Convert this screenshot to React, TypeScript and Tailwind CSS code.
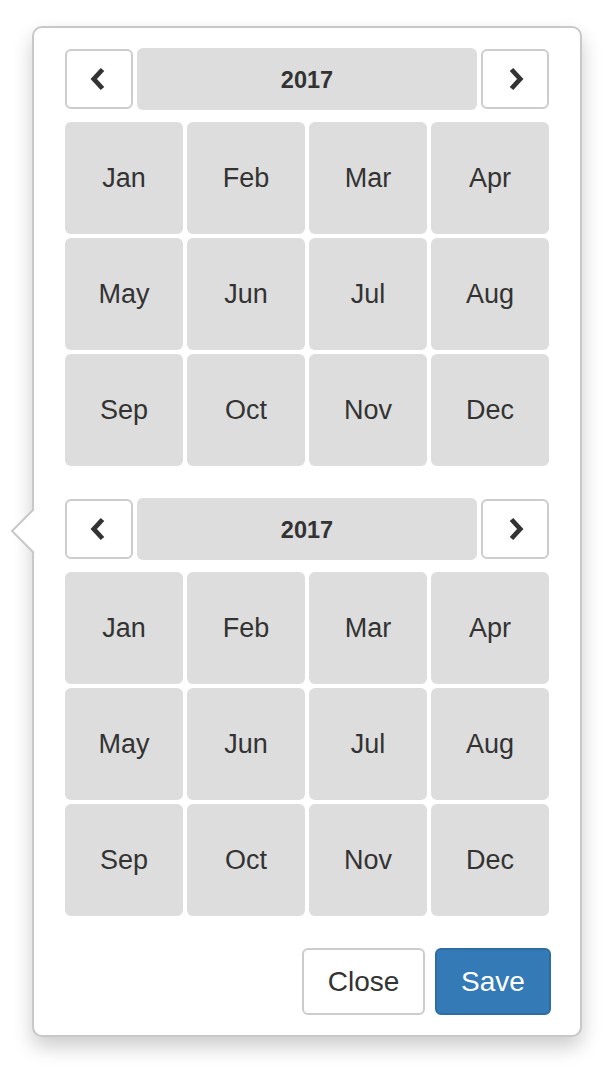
const MONTHS = ['Jan', 'Feb', 'Mar', 'Apr', 'May', 'Jun', 'Jul', 'Aug', 'Sep', 'Oct', 'Nov', 'Dec'];

function Chevron({ dir }: { dir: 'left' | 'right' }) {
  return (
    <svg width="16" height="24" viewBox="0 0 16 24" className={dir === 'right' ? 'rotate-180' : ''}>
      <polyline points="12.5,2.5 3.8,12 12.5,21.5" fill="none" stroke="#333" strokeWidth="4.8" strokeLinejoin="miter" />
    </svg>
  );
}

function MonthPicker() {
  return (
    <div className="flex flex-col">
      {/* year header */}
      <div className="flex items-center gap-[4px]">
        <button className="w-[68px] h-[60px] rounded-[6px] border-2 border-[#cccccc] bg-white flex items-center justify-center pr-[3px]">
          <Chevron dir="left" />
        </button>
        <div className="flex-1 h-[62px] rounded-[6px] bg-[#dddddd] flex items-center justify-center pt-[3px] text-[23.5px] font-bold text-[#333333]">
          2017
        </div>
        <button className="w-[68px] h-[60px] rounded-[6px] border-2 border-[#cccccc] bg-white flex items-center justify-center pl-[2px]">
          <Chevron dir="right" />
        </button>
      </div>

      {/* months */}
      <div className="grid grid-cols-4 gap-[4px] mt-[12px]">
        {MONTHS.map((m) => (
          <div key={m} className="h-[112px] rounded-[6px] bg-[#dddddd] flex items-center justify-center text-[27px] text-[#333333]">
            {m}
          </div>
        ))}
      </div>
    </div>
  );
}

export default function App() {
  return (
    <div className="w-[615px] h-[1077px] bg-white font-[family-name:'Liberation_Sans',Arial,sans-serif]">
      <div className="pt-[26px] pl-[32px]">
        <div className="relative w-[550px] rounded-[10px] border-2 border-[#c8c8c8] bg-white shadow-[0_10px_20px_rgba(0,0,0,0.2)] pt-[20px] pb-[20px] pl-[31px] pr-[31px]">
          {/* arrow */}
          <svg width="26" height="46" viewBox="0 0 26 46" className="absolute left-[-24px] top-[480px]">
            <polygon points="24,1 2,23 24,45 26,45 26,1" fill="white" />
            <polyline points="24,1 2,23 24,45" fill="none" stroke="#c8c8c8" strokeWidth="2" />
          </svg>

          <div className="flex flex-col gap-[32px]">
            <MonthPicker />
            <MonthPicker />
            <div className="flex justify-end gap-[10px] mr-[-2px]">
              <button className="w-[123px] h-[67px] rounded-[6px] border-2 border-[#cccccc] bg-white text-[28px] text-[#333333]">
                Close
              </button>
              <button className="w-[116px] h-[67px] rounded-[6px] border-2 border-[#2e6da4] bg-[#337ab7] text-[28px] text-white">
                Save
              </button>
            </div>
          </div>
        </div>
      </div>
    </div>
  );
}
